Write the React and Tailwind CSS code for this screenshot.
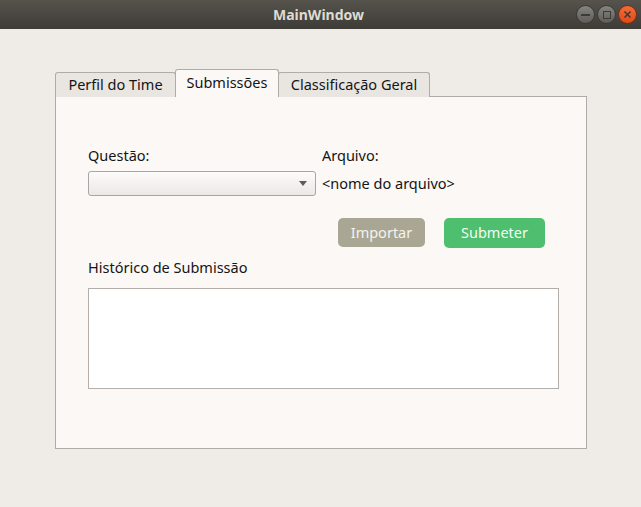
import React from "react";

const font = { fontFamily: '"Noto Sans", "Open Sans", sans-serif' };

function TitleBar() {
  return (
    <div className="relative h-[29px] w-full bg-gradient-to-b from-[#55534c] to-[#3d3c37] flex items-center justify-center">
      <span className="text-[14px] font-bold text-[#dfdbd2] ml-[-4px]" style={font}>MainWindow</span>
      <div className="absolute right-[4px] top-[5px] flex gap-[2px]">
        <div className="w-[19px] h-[19px] rounded-full bg-gradient-to-b from-[#858480] to-[#5e5d59] border border-[#3a3935] flex items-center justify-center">
          <div className="w-[9px] h-[2px] bg-[#3c3b37]" />
        </div>
        <div className="w-[19px] h-[19px] rounded-full bg-gradient-to-b from-[#858480] to-[#5e5d59] border border-[#3a3935] flex items-center justify-center">
          <div className="w-[8px] h-[8px] border-[1.5px] border-[#3c3b37]" />
        </div>
        <div className="w-[19px] h-[19px] rounded-full bg-gradient-to-b from-[#f26b3a] to-[#df4a16] border border-[#7a2e10] flex items-center justify-center">
          <svg width="9" height="9" viewBox="0 0 9 9">
            <path d="M1.5 1.5 L7.5 7.5 M7.5 1.5 L1.5 7.5" stroke="#3c3b37" strokeWidth="1.5" />
          </svg>
        </div>
      </div>
    </div>
  );
}

export default function App() {
  return (
    <div className="w-[641px] h-[507px] bg-[#efebe7] flex flex-col overflow-hidden" style={font}>
      <TitleBar />
      <div className="pl-[55px] pt-[39px] text-[14.5px] text-[#151515]">
        <div className="flex items-end h-[28px] relative z-10">
          <div className="h-[25px] w-[121px] border border-[#b0aba6] border-b-0 rounded-t-[3px] bg-[#e9e5e1] flex items-center justify-center mb-[-1px]">
            Perfil do Time
          </div>
          <div className="h-[28px] w-[104px] border border-[#b0aba6] border-b-0 rounded-t-[3px] bg-[#fbf8f5] flex items-center justify-center mb-[-1px] ml-[-1px] pb-[2px]">
            Submissões
          </div>
          <div className="h-[25px] w-[152px] border border-[#b0aba6] border-b-0 rounded-t-[3px] bg-[#e9e5e1] flex items-center justify-center mb-[-1px] ml-[-1px]">
            Classificação Geral
          </div>
        </div>
        <div className="w-[532px] h-[353px] border border-[#b0aba6] bg-[#fbf8f5] pl-[32px] pt-[49px] relative">
          <div className="flex gap-[6px]">
            <div className="w-[228px] flex flex-col">
              <div className="h-[18px] leading-[18px]">Questão:</div>
              <div className="mt-[7px] h-[25px] w-[228px] rounded-[3px] border border-[#aaa5a0] bg-gradient-to-b from-[#fdfcfb] to-[#ebe8e5] flex items-center justify-end pr-[8px]">
                <svg width="8" height="5" viewBox="0 0 8 5"><path d="M0 0 L8 0 L4 5 Z" fill="#5c5c5c" /></svg>
              </div>
            </div>
            <div className="flex flex-col">
              <div className="h-[18px] leading-[18px]">Arquivo:</div>
              <div className="mt-[7px] h-[25px] flex items-center">&lt;nome do arquivo&gt;</div>
            </div>
          </div>
          <div className="flex mt-[22px] ml-[250px] gap-[19px]">
            <div className="w-[87px] h-[29px] rounded-[5px] bg-[#a9a794] text-[#f4f2ee] flex items-center justify-center">Importar</div>
            <div className="w-[101px] h-[30px] rounded-[5px] bg-[#4dbf6e] text-[#f4fbf5] flex items-center justify-center">Submeter</div>
          </div>
          <div className="mt-[10px] h-[18px] leading-[18px]">Histórico de Submissão</div>
          <div className="mt-[12px] w-[471px] h-[101px] border border-[#b3aea9] bg-white" />
        </div>
      </div>
    </div>
  );
}
